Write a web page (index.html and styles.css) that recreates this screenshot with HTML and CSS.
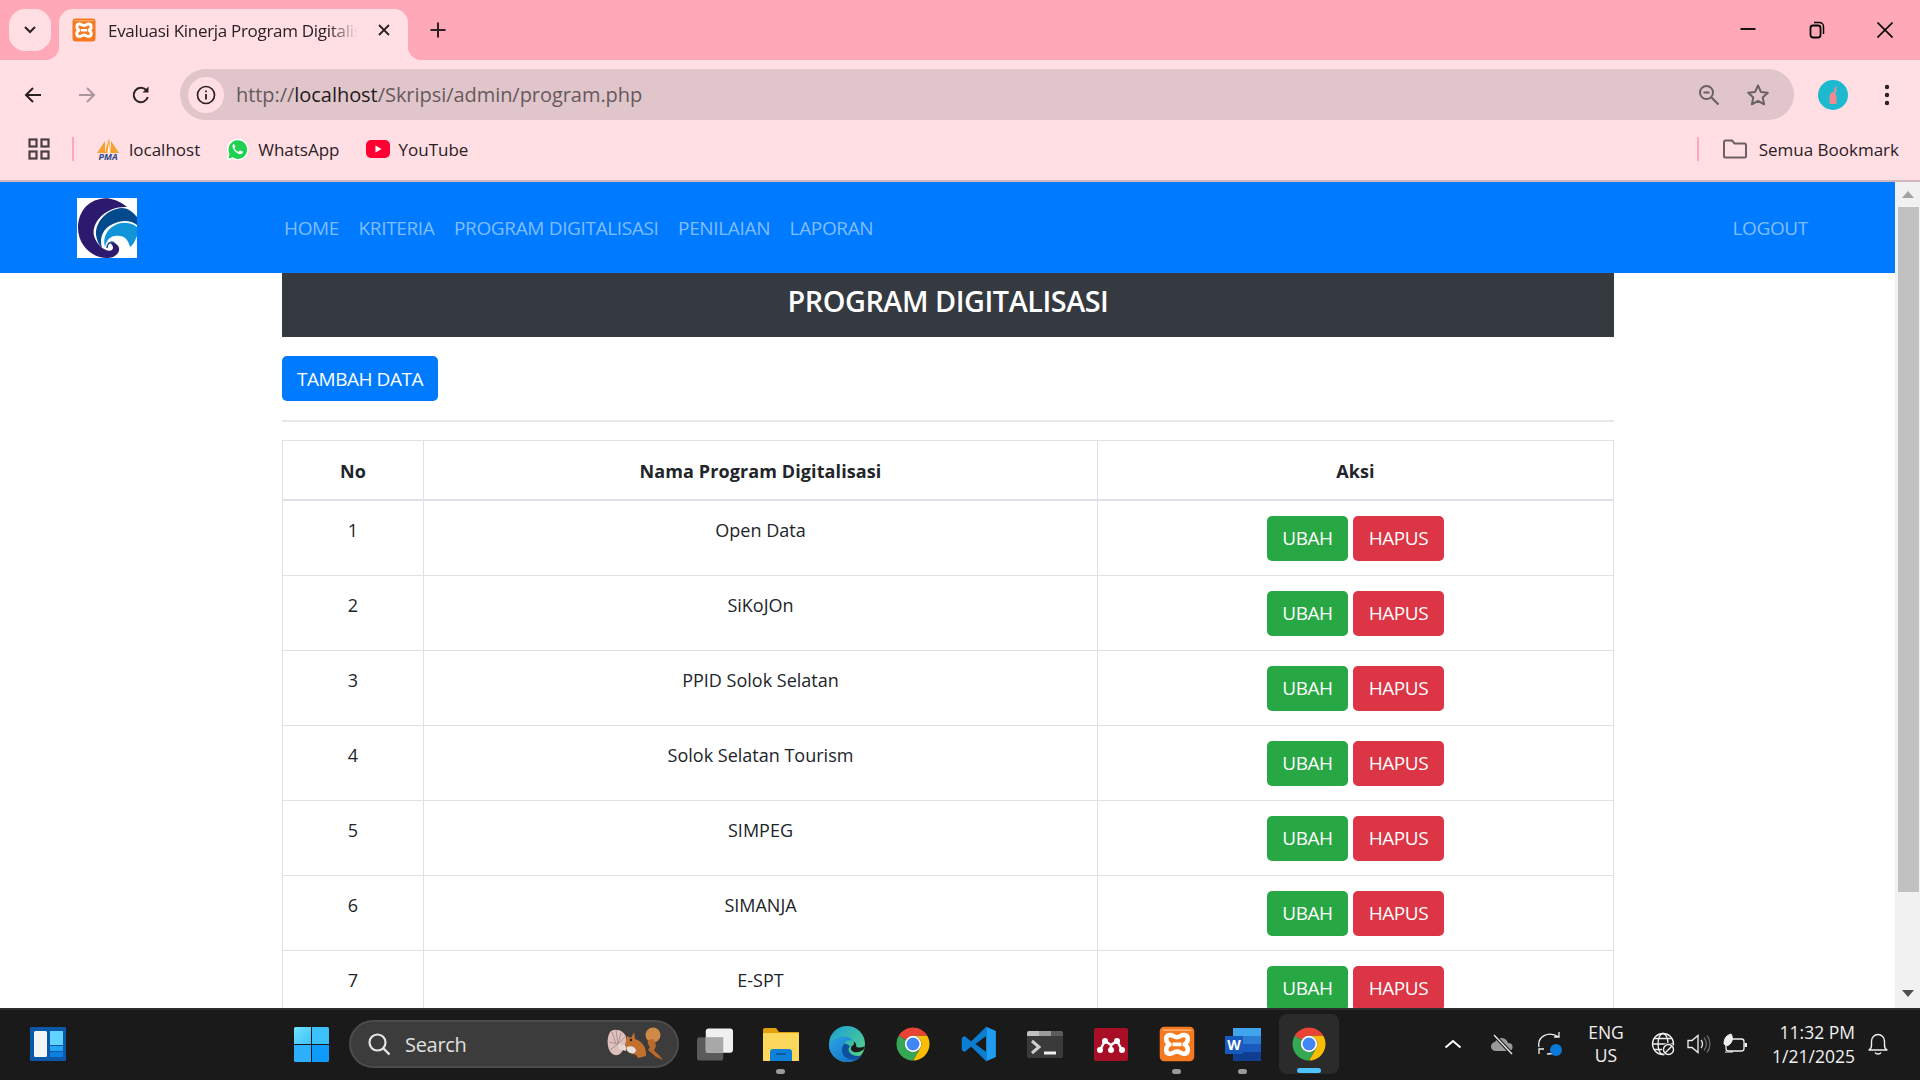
FILE: index.html
```html
<!DOCTYPE html>
<html lang="id">
<head>
  <meta charset="UTF-8" />
  <title>Evaluasi Kinerja Program Digitalisasi</title>
  <link rel="stylesheet" href="styles.css">
</head>
<body>
  <svg class="defs" width="0" height="0">
    <defs>
      <symbol id="chrome" viewBox="0 0 48 48">
        <path fill="#ea4335" d="M4.95 13A22 22 0 0 1 43.05 13L24 13A11 11 0 0 0 14.47 18.5Z"/>
        <path fill="#fbbc04" d="M43.05 13A22 22 0 0 1 24 46L33.53 29.5A11 11 0 0 0 24 13Z"/>
        <path fill="#34a853" d="M24 46A22 22 0 0 1 4.95 13L14.47 18.5A11 11 0 0 0 33.53 29.5Z"/>
        <circle cx="24" cy="24" r="11" fill="#fff"/>
        <circle cx="24" cy="24" r="8.6" fill="#4285f4"/>
      </symbol>
      <symbol id="xampp" viewBox="0 0 48 48">
        <rect x="1" y="1" width="46" height="46" rx="6" fill="#f5791f"/>
        <path d="M5 5.500H43" stroke="#ffc59a" stroke-width="1.500"/>
        <path fill="none" stroke="#fff" stroke-width="6" stroke-linejoin="round" d="M15 12C8 12 8 21 14 24.500C8 28 8 37 15 37C19 37 20 34 24 34C28 34 29 37 33 37C40 37 40 28 34 24.500C40 21 40 12 33 12C29 12 28 15 24 15C20 15 19 12 15 12Z"/>
        <path stroke="#fff" stroke-width="5" d="M18 24.500H30"/>
      </symbol>
      <linearGradient id="winblue" x1="0" y1="0" x2="1" y2="1">
        <stop offset="0" stop-color="#6fe4fd"/>
        <stop offset="1" stop-color="#3cc0fc"/>
      </linearGradient>
      <linearGradient id="edgeback" x1="0" y1="0" x2="1" y2="1">
        <stop offset="0" stop-color="#1b9fd8"/>
        <stop offset="1" stop-color="#5ad87c"/>
      </linearGradient>
      <linearGradient id="edgeblue" x1="0" y1="0" x2="1" y2="1">
        <stop offset="0" stop-color="#2aa5e8"/>
        <stop offset="1" stop-color="#0f6cbd"/>
      </linearGradient>
    </defs>
  </svg>

  <header class="browser">
    <div class="tabstrip">
      <button class="tab-search" aria-label="Cari tab">
        <svg width="14" height="10" viewBox="0 0 14 10"><path d="M2 2l5 5 5-5" fill="none" stroke="#2b2024" stroke-width="2"/></svg>
      </button>
      <div class="tab">
        <svg class="tab-icon" width="24" height="24"><use href="#xampp"/></svg>
        <span class="tab-title">Evaluasi Kinerja Program Digitalisasi</span>
        <svg class="tab-close" width="14" height="14" viewBox="0 0 14 14"><path d="M2 2l10 10M12 2L2 12" stroke="#2b2024" stroke-width="1.800"/></svg>
      </div>
      <svg class="tab-new" width="18" height="18" viewBox="0 0 18 18"><path d="M9 1.500v15M1.500 9h15" stroke="#2b2024" stroke-width="2"/></svg>
      <div class="window-controls">
        <svg width="16" height="16" viewBox="0 0 16 16"><path d="M0.500 7h15" stroke="#000" stroke-width="1.800"/></svg>
        <svg width="16" height="18" viewBox="0 0 16 18"><rect x="1.500" y="4.500" width="10" height="12" rx="2.500" fill="none" stroke="#000" stroke-width="1.800"/><path d="M5 1.500h5.500a4 4 0 0 1 4 4V13" fill="none" stroke="#000" stroke-width="1.500"/></svg>
        <svg width="16" height="16" viewBox="0 0 16 16"><path d="M0.500 0.500l15 15M15.500 0.500l-15 15" stroke="#000" stroke-width="1.600"/></svg>
      </div>
    </div>

    <div class="toolbar">
      <svg class="tool-back" width="20" height="20" viewBox="0 0 20 20"><path d="M18 10H3M10 3l-7 7 7 7" fill="none" stroke="#2b2024" stroke-width="2"/></svg>
      <svg class="tool-forward" width="20" height="20" viewBox="0 0 20 20"><path d="M2 10h15M10 3l7 7-7 7" fill="none" stroke="#a8979b" stroke-width="2"/></svg>
      <svg class="tool-reload" width="20" height="20" viewBox="0 0 20 20"><path d="M16.800 12a7.200 7.200 0 1 1-1.500-6.800" fill="none" stroke="#2b2024" stroke-width="2"/><path d="M17.500 1.500v6h-6z" fill="#2b2024"/></svg>
      <div class="omnibox">
        <span class="site-info">
          <svg width="20" height="20" viewBox="0 0 20 20"><circle cx="10" cy="10" r="8.500" fill="none" stroke="#2b2024" stroke-width="1.700"/><path d="M10 9v5.500M10 5.500v1.800" stroke="#2b2024" stroke-width="1.800"/></svg>
        </span>
        <span class="url">http://<b>localhost</b>/Skripsi/admin/program.php</span>
        <svg class="omni-zoom" width="22" height="22" viewBox="0 0 22 22"><circle cx="8.500" cy="8.500" r="6.500" fill="none" stroke="#6b6063" stroke-width="2"/><path d="M13.500 13.500l7 7" stroke="#6b6063" stroke-width="2.200"/><path d="M5.500 8.500h6" stroke="#6b6063" stroke-width="2"/></svg>
        <svg class="omni-star" width="24" height="24" viewBox="0 0 24 24"><path d="M12 2.500l2.900 6.400 6.900.8-5.100 4.700 1.400 6.900-6.100-3.500-6.100 3.500 1.400-6.900-5.100-4.700 6.900-.8z" fill="none" stroke="#6b6063" stroke-width="2" stroke-linejoin="round"/></svg>
      </div>
      <svg class="avatar" width="30" height="30" viewBox="0 0 30 30">
        <circle cx="15" cy="15" r="15" fill="#1cb9cf"/>
        <path d="M19 6l-1 4 1 1.500-2 1c1.500 3 2.500 6 1 10l1 1.500h-7l-1-1 1-1c-1-3-1-7 1-9l3-1.500.5-3.500z" fill="#ef8a94"/>
      </svg>
      <svg class="kebab" width="6" height="24" viewBox="0 0 6 24"><circle cx="3" cy="4" r="2.200" fill="#2b2024"/><circle cx="3" cy="12" r="2.200" fill="#2b2024"/><circle cx="3" cy="20" r="2.200" fill="#2b2024"/></svg>
    </div>

    <div class="bookmarks">
      <svg class="apps" width="22" height="22" viewBox="0 0 22 22"><g fill="none" stroke="#4a3f43" stroke-width="2.200"><rect x="1.500" y="1.500" width="7" height="7"/><rect x="13.500" y="1.500" width="7" height="7"/><rect x="1.500" y="13.500" width="7" height="7"/><rect x="13.500" y="13.500" width="7" height="7"/></g></svg>
      <span class="bm-sep"></span>
      <a class="bm bm-pma">
        <span class="pma-icon">
          <svg width="24" height="15" viewBox="0 0 24 15"><path d="M1 15L9 3v12zM9 15l4-15 2 15zM15 15V3l8 12z" fill="#f8a02c"/><path d="M11.500 15L13 4l1 11z" fill="#fff"/></svg>
          <i>PMA</i>
        </span>
        localhost
      </a>
      <a class="bm bm-wa">
        <svg width="24" height="25" viewBox="0 0 24 24"><path d="M1.500 23l1.600-6A10.800 10.800 0 1 1 7 21.200z" fill="#fff"/><path d="M3.300 21l1.300-4.500A9.300 9.300 0 1 1 7.600 19.800z" fill="#1fd14f"/><path d="M8.800 6.600c-.5 0-1.300.7-1.300 2.200 0 3 3.900 7.400 7.500 8 1.500.200 2.500-.7 2.700-1.700.1-.5.100-.9 0-1l-2.400-1.200c-.3-.100-.5 0-.7.200l-.8 1c-.2.200-.4.200-.7.100-1.400-.6-2.900-1.900-3.600-3.200-.1-.3 0-.4.100-.6l.6-.8c.1-.2.200-.4.100-.6L9.300 7c-.1-.3-.3-.4-.5-.4z" fill="#fff"/></svg>
        WhatsApp
      </a>
      <a class="bm bm-yt">
        <svg width="24" height="18" viewBox="0 0 24 18"><rect width="24" height="18" rx="5" fill="#ff0033"/><path d="M9.500 5.500v7l6-3.500z" fill="#fff"/></svg>
        YouTube
      </a>
      <span class="bm-sep bm-sep-right"></span>
      <a class="bm bm-all">
        <svg width="24" height="20" viewBox="0 0 24 20"><path d="M1 3a1.500 1.500 0 0 1 1.500-1.500H9L11.500 4.500H21.500A1.500 1.500 0 0 1 23 6V17a1.500 1.500 0 0 1-1.500 1.500h-19A1.500 1.500 0 0 1 1 17z" fill="none" stroke="#6b6063" stroke-width="2"/></svg>
        Semua Bookmark
      </a>
    </div>
  </header>

  <div class="viewport">
    <div class="page">
      <nav class="navbar">
        <svg class="brand" width="60" height="60" viewBox="0 0 60 60">
          <rect width="60" height="60" fill="#fff"/>
          <path fill="#2d1a6e" d="M50 9C40 1 30-1 23 1C8 4 1 17 1 30C1 46 14 60 30 60C38 60 43 55 42 50C41 46 37 44 33 45C36 47 37 50 35 52C30 55 20 48 17 38C14 25 28 8 50 9Z"/>
          <path fill="#034a8d" d="M60 19C55 13 50 10 45 10C30 11 18 24 19 37C20 43 22 47 25 50C22 40 26 30 36 26C44 22 54 22 60 27Z"/>
          <path fill="#1295d8" d="M60 29C52 23 42 24 35 29C28 34 26 42 28 49C29 43 33 38 38 38C48 37 51 42 53 49C56 47 58 43 60 38Z"/>
          <path fill="none" stroke="#1b4f9c" stroke-width="1.500" d="M30 50C30 45 35 42 38 46"/>
        </svg>
        <ul class="nav-links">
          <li><a href="#">HOME</a></li>
          <li><a href="#">KRITERIA</a></li>
          <li><a href="#">PROGRAM DIGITALISASI</a></li>
          <li><a href="#">PENILAIAN</a></li>
          <li><a href="#">LAPORAN</a></li>
        </ul>
        <a class="nav-logout" href="#">LOGOUT</a>
      </nav>

      <main class="container">
        <h3 class="page-title">PROGRAM DIGITALISASI</h3>
        <a class="btn btn-primary btn-add" href="#">TAMBAH DATA</a>
        <hr>
        <table class="data-table">
          <colgroup>
            <col class="col-no">
            <col class="col-name">
            <col class="col-act">
          </colgroup>
          <thead>
            <tr><th>No</th><th>Nama Program Digitalisasi</th><th>Aksi</th></tr>
          </thead>
          <tbody>
            <tr><td>1</td><td>Open Data</td><td><div class="actions"><a class="btn btn-green">UBAH</a><a class="btn btn-red">HAPUS</a></div></td></tr>
            <tr><td>2</td><td>SiKoJOn</td><td><div class="actions"><a class="btn btn-green">UBAH</a><a class="btn btn-red">HAPUS</a></div></td></tr>
            <tr><td>3</td><td>PPID Solok Selatan</td><td><div class="actions"><a class="btn btn-green">UBAH</a><a class="btn btn-red">HAPUS</a></div></td></tr>
            <tr><td>4</td><td>Solok Selatan Tourism</td><td><div class="actions"><a class="btn btn-green">UBAH</a><a class="btn btn-red">HAPUS</a></div></td></tr>
            <tr><td>5</td><td>SIMPEG</td><td><div class="actions"><a class="btn btn-green">UBAH</a><a class="btn btn-red">HAPUS</a></div></td></tr>
            <tr><td>6</td><td>SIMANJA</td><td><div class="actions"><a class="btn btn-green">UBAH</a><a class="btn btn-red">HAPUS</a></div></td></tr>
            <tr><td>7</td><td>E-SPT</td><td><div class="actions"><a class="btn btn-green">UBAH</a><a class="btn btn-red">HAPUS</a></div></td></tr>
          </tbody>
        </table>
      </main>
    </div>

    <div class="scrollbar">
      <span class="arrow-up"></span>
      <span class="thumb"></span>
      <span class="arrow-down"></span>
    </div>
  </div>

  <footer class="taskbar">
    <svg class="widgets" width="36" height="34" viewBox="0 0 36 34">
      <rect width="36" height="34" rx="1" fill="#0c58a8"/>
      <rect x="4" y="4" width="13" height="26" rx="1.500" fill="#f4f4f4"/>
      <rect x="20" y="4" width="13" height="14" fill="#62d2ff"/>
      <rect x="20" y="19" width="13" height="5" fill="#1fa5f3"/>
      <rect x="20" y="25" width="13" height="5" fill="#0d7fe0"/>
    </svg>
    <svg class="winlogo" width="35" height="35" viewBox="0 0 35 35">
      <path fill="url(#winblue)" d="M1.500 0H17V17H0V1.500A1.500 1.500 0 0 1 1.500 0Z"/>
      <path fill="#3cc0fc" d="M18 0H33.500A1.500 1.500 0 0 1 35 1.500V17H18Z"/>
      <path fill="#2cb0fc" d="M0 18H17V35H1.500A1.500 1.500 0 0 1 0 33.500Z"/>
      <path fill="#0f9bfb" d="M18 18H35V33.500A1.500 1.500 0 0 1 33.500 35H18Z"/>
    </svg>
    <div class="search">
      <svg width="24" height="24" viewBox="0 0 24 24"><circle cx="10.500" cy="10.500" r="8" fill="none" stroke="#e6e6e6" stroke-width="2.200"/><path d="M16.500 16.500l6 6" stroke="#e6e6e6" stroke-width="2.400"/></svg>
      <span>Search</span>
      <svg class="squirrel" width="58" height="36" viewBox="0 0 58 36">
        <path d="M4 5C10 2 17 5 19 11C20 18 16 27 11 29C6 30 2 26 1 20C0 14 1 8 4 5Z" fill="#dcc1bc"/>
        <path d="M5 6l4 12M9 4l2 14M14 7l-3 11M18 11l-7 7M2 16l9 2M3 24l8-6" stroke="#a5888a" stroke-width=".8"/>
        <path d="M11 18l9 2-1 5-7-2z" fill="#e8d8d4"/>
        <circle cx="46" cy="9" r="7.500" fill="#d08a48"/>
        <path d="M41 14c-1 3 1 6 2 7l-2 3 8 7 7 3c-1-2-3-3-4-5-2-2-4-3-5-5 3-3 2-8-1-11z" fill="#b8692b"/>
        <path d="M20 10l4 2 3-6 1 7c4 1 8 4 10 9 1 3 1 6 1 8l-8 2-2-3-8-3c-3-4-3-9-1-16z" fill="#c2702e"/>
        <path d="M20 21c4-2 8 0 9 3 0 3-3 4-6 3-2-1-4-3-3-6z" fill="#e8e0dc"/>
        <circle cx="24" cy="14" r="1.200" fill="#2a1a10"/>
      </svg>
    </div>
    <div class="task-icons">
      <span class="task">
        <svg width="37" height="33" viewBox="0 0 37 33"><rect y="9" width="27" height="24" rx="3" fill="#5a5a5a"/><rect x="9" width="28" height="25" rx="3" fill="#f0f0f0"/><rect x="9" y="9" width="18" height="16" fill="#a8a8a8"/></svg>
      </span>
      <span class="task task-open">
        <svg width="36" height="33" viewBox="0 0 36 33"><path d="M0 2a2 2 0 0 1 2-2h11l3 4h20v29H0z" fill="#e3a008"/><rect y="5" width="36" height="28" rx="1" fill="#fbd75b"/><path d="M7 33V24a3 3 0 0 1 3-3h16a3 3 0 0 1 3 3v9z" fill="#0f80d8"/><path d="M13 26h10" stroke="#0a4f94" stroke-width="1.500"/></svg>
      </span>
      <span class="task">
        <svg width="36" height="36" viewBox="0 0 36 36">
          <circle cx="18" cy="18" r="18" fill="url(#edgeback)"/>
          <path fill="url(#edgeblue)" d="M0 19C0 28 8 36 18 36C24 36 29 34 32 30C28 32 22 33 18 30C14 27 13 22 15 18C16 15 20 13 24 15C20 9 8 8 0 19Z"/>
          <path fill="#0e4f9e" d="M15 18C11 23 13 31 20 33C25 34.500 30 33 33 29C29 31 24 30 21 27C19 25 19 22 21 20C18 18 16 17 15 18Z"/>
          <path fill="#1a1a1a" d="M24 15C26 17 25 19 23 20C21 22 22 25 25 26C29 27 33 25 35 23L36 20C32 22 28 22 27 20C28 18 26 16 24 15Z"/>
        </svg>
      </span>
      <span class="task"><svg width="36" height="36"><use href="#chrome"/></svg></span>
      <span class="task">
        <svg width="36" height="36" viewBox="0 0 100 100"><path fill="#1f9cf0" d="M70 2L97 14V86L70 98Z"/><path fill="#0a7ed3" d="M70 2L28 43L10 28L2 33V67L10 72L28 57L70 98V72L40 50L70 28Z"/></svg>
      </span>
      <span class="task">
        <svg width="36" height="27" viewBox="0 0 36 27"><rect width="36" height="27" rx="2" fill="#3a3a3a"/><path d="M0 2a2 2 0 0 1 2-2h10v5H0z" fill="#c0c0c0"/><rect x="12" width="12" height="5" fill="#9a9a9a"/><path d="M24 0h10a2 2 0 0 1 2 2v3H24z" fill="#5c5c5c"/><path d="M5 10l7 6-7 6" fill="none" stroke="#cfcfcf" stroke-width="3"/><path d="M17 22h12" stroke="#f0f0f0" stroke-width="3"/></svg>
      </span>
      <span class="task">
        <svg width="34" height="33" viewBox="0 0 34 33"><rect width="34" height="33" rx="2" fill="#a80f26"/><path d="M6 22L11 13 17 17 23 13 28 22M17 17v5" fill="none" stroke="#fff" stroke-width="2.500"/><g fill="#fff"><circle cx="6" cy="22" r="3"/><circle cx="28" cy="22" r="3"/><circle cx="17" cy="22" r="3"/><circle cx="11" cy="13" r="3"/><circle cx="23" cy="13" r="3"/></g></svg>
      </span>
      <span class="task task-open"><svg width="36" height="36"><use href="#xampp"/></svg></span>
      <span class="task task-open">
        <svg width="36" height="33" viewBox="0 0 36 33"><rect x="8" width="28" height="33" rx="2" fill="#2b7cd3"/><rect x="8" width="28" height="8" fill="#41a5ee"/><rect x="8" y="16" width="28" height="8" fill="#185abd"/><rect x="8" y="24" width="28" height="9" fill="#103f91"/></svg>
        <b class="word-w">W</b>
      </span>
      <span class="task task-active"><svg width="36" height="36"><use href="#chrome"/></svg></span>
    </div>
    <div class="tray">
      <svg class="tray-caret" width="18" height="10" viewBox="0 0 18 10"><path d="M1.500 8.500L9 2l7.500 6.500" fill="none" stroke="#fff" stroke-width="2"/></svg>
      <svg class="tray-cloud" width="24" height="22" viewBox="0 0 24 22"><path d="M6 18a4.500 4.500 0 0 1-1-9 7 7 0 0 1 13 1 4 4 0 0 1 1 8z" fill="#9a9a9a"/><path d="M4 2l18 19" stroke="#1a1a1a" stroke-width="3.500"/><path d="M4 2l18 19" stroke="#f0f0f0" stroke-width="1.300"/></svg>
      <svg class="tray-sync" width="24" height="26" viewBox="0 0 24 26"><path d="M1 16C-1 6 10-1 21 6M21 1v5h-5M21 22l-12 1M1 23v-5h5" fill="none" stroke="#f0f0f0" stroke-width="1.300"/><circle cx="18" cy="19" r="6" fill="#0a78d7"/></svg>
      <div class="lang">ENG<br>US</div>
      <svg class="tray-globe" width="24" height="24" viewBox="0 0 24 24"><g fill="none" stroke="#f0f0f0" stroke-width="1.300"><circle cx="12" cy="12" r="10.500"/><ellipse cx="12" cy="12" rx="5" ry="10.500"/><path d="M1.500 12h21M3 6.500h18M3 17.500h9"/></g><circle cx="17.500" cy="17.500" r="6.500" fill="#1a1a1a"/><circle cx="17.500" cy="17.500" r="5" fill="none" stroke="#f0f0f0" stroke-width="1.400"/><path d="M14 21l7-7" stroke="#f0f0f0" stroke-width="1.400"/></svg>
      <svg class="tray-sound" width="24" height="22" viewBox="0 0 24 22"><path d="M1 7.500h4l6-5v17l-6-5H1z" fill="none" stroke="#f0f0f0" stroke-width="1.300"/><path d="M14 7c2 2 2 6 0 8" fill="none" stroke="#f0f0f0" stroke-width="1.300"/><path d="M17 4.500c3 4 3 9 0 13M20 2.500c4 5 4 12 0 17" fill="none" stroke="#6a6a6a" stroke-width="1.300"/></svg>
      <svg class="tray-battery" width="25" height="22" viewBox="0 0 25 22"><rect x="3" y="6" width="18" height="12" rx="2.500" fill="none" stroke="#f0f0f0" stroke-width="1.300"/><rect x="21.500" y="10" width="2.500" height="4" fill="#f0f0f0"/><path d="M1 11C1 5 4 2 8 1c2 3 2 7-1 10-2 2-4 2-6 0zM2 19h8" fill="#f0f0f0" stroke="#f0f0f0"/></svg>
      <div class="clock">11:32 PM<br>1/21/2025</div>
      <svg class="tray-bell" width="20" height="22" viewBox="0 0 20 22"><path d="M1 17c2-1 2.500-3 2.500-5V8a6.500 6.500 0 0 1 13 0v4c0 2 .5 4 2.500 5z" fill="none" stroke="#f0f0f0" stroke-width="1.400" stroke-linejoin="round"/><path d="M7 19.500c1 2 5 2 6 0" fill="none" stroke="#f0f0f0" stroke-width="1.400"/></svg>
    </div>
  </footer>
</body>
</html>
```

FILE: styles.css
```css
* {
  box-sizing: border-box;
}
html, body {
  height: 100%;
}
body {
  margin: 0;
  width: 1920px;
  height: 1080px;
  overflow: hidden;
  display: flex;
  flex-direction: column;
  font-family: "Open Sans", "Noto Sans", sans-serif;
  color: #212529;
  background: #fff;
}
a {
  text-decoration: none;
}
.defs {
  position: absolute;
}

/* browser chrome */
.browser {
  flex: none;
  height: 182px;
  background: #ffdfe4;
  border-bottom: 2px solid #d2b6bb;
}
.tabstrip {
  height: 60px;
  background: #ffa9b8;
  display: flex;
  align-items: flex-start;
  padding: 9px 0 0 9px;
}
.tab-search {
  width: 42px;
  height: 42px;
  border: none;
  border-radius: 16px;
  background: #ffdfe4;
  padding: 0;
}
.tab {
  width: 349px;
  height: 51px;
  margin-left: 8px;
  background: #ffdfe4;
  border-radius: 14px 14px 0 0;
  display: flex;
  align-items: center;
  padding: 0 0 9px 13px;
  font-size: 17px;
  color: #2b2024;
  position: relative;
}
.tab::before,
.tab::after {
  content: "";
  position: absolute;
  bottom: 0;
  width: 14px;
  height: 14px;
}
.tab::before {
  left: -14px;
  background: radial-gradient(circle at 0 0, #ffa9b8 14px, #ffdfe4 14.5px);
}
.tab::after {
  right: -14px;
  background: radial-gradient(circle at 100% 0, #ffa9b8 14px, #ffdfe4 14.5px);
}
.tab-icon {
  flex: none;
}
.tab-title {
  width: 250px;
  margin-left: 12px;
  white-space: nowrap;
  overflow: hidden;
  letter-spacing: -0.3px;
  -webkit-mask-image: linear-gradient(to right, #000 88%, transparent 100%);
  mask-image: linear-gradient(to right, #000 88%, transparent 100%);
}
.tab-close {
  margin-left: 19px;
}
.tab-new {
  margin: 12px 0 0 21px;
}
.window-controls {
  margin-left: auto;
  width: 180px;
  height: 42px;
  padding-right: 27px;
  display: flex;
  align-items: center;
  justify-content: space-between;
}
.toolbar {
  height: 60px;
  display: flex;
  align-items: center;
  padding: 9px 0 0 23px;
}
.tool-forward {
  margin-left: 34px;
}
.tool-reload {
  margin-left: 34px;
}
.omnibox {
  width: 1614px;
  height: 51px;
  margin-left: 29px;
  background: #e0c6ca;
  border-radius: 26px;
  display: flex;
  align-items: center;
  padding-left: 8px;
}
.site-info {
  width: 36px;
  height: 36px;
  border-radius: 50%;
  background: #ffdfe4;
  display: flex;
  align-items: center;
  justify-content: center;
}
.url {
  margin-left: 12px;
  font-size: 20px;
  letter-spacing: -0.05px;
  color: #66595d;
}
.url b {
  font-weight: 400;
  color: #1f1a1c;
}
.omni-zoom {
  margin-left: auto;
}
.omni-star {
  margin: 0 24px 0 26px;
}
.avatar {
  margin-left: 24px;
}
.kebab {
  margin-left: 36px;
}
.bookmarks {
  height: 60px;
  display: flex;
  align-items: center;
  padding-left: 28px;
  padding-bottom: 2px;
  font-size: 17px;
  color: #2b2024;
}
.bm-sep {
  width: 2px;
  height: 24px;
  margin-left: 22px;
  background: #ffa9b8;
}
.bm {
  display: flex;
  align-items: center;
  color: #2b2024;
}
.bm-pma {
  margin-left: 22px;
  gap: 9px;
}
.pma-icon {
  width: 24px;
  height: 23px;
  display: flex;
  flex-direction: column;
  align-items: center;
  font-size: 9px;
  line-height: 8px;
  font-weight: 700;
  color: #2f4a86;
  letter-spacing: 0;
}
.pma-icon svg {
  flex: none;
}
.bm-wa {
  margin-left: 25px;
  gap: 9px;
}
.bm-yt {
  margin-left: 26px;
  gap: 9px;
}
.bm-sep-right {
  margin-left: auto;
}
.bm-all {
  margin: 0 21px 0 24px;
  gap: 12px;
}

/* page area */
.viewport {
  flex: none;
  height: 826px;
  display: flex;
}
.page {
  width: 1895px;
  overflow: hidden;
}
.navbar {
  height: 91px;
  background: #007bff;
  display: flex;
  align-items: center;
  padding: 0 87px 0 77px;
  font-size: 19px;
}
.brand {
  flex: none;
}
.nav-links {
  list-style: none;
  margin: 0 0 0 147px;
  padding: 0;
  display: flex;
  gap: 19.500px;
}
.nav-links a,
.nav-logout {
  color: #80bdff;
  letter-spacing: -0.35px;
}
.nav-logout {
  margin-left: auto;
}
.container {
  width: 1332px;
  margin-left: 282px;
}
.page-title {
  margin: 0 0 19px;
  height: 64px;
  padding-top: 10px;
  background: #343a40;
  color: #fff;
  text-align: center;
  font-size: 28.800px;
  line-height: 36px;
  font-weight: 600;
  letter-spacing: -0.45px;
}
.btn {
  display: inline-flex;
  align-items: center;
  justify-content: center;
  height: 45px;
  border-radius: 5px;
  color: #fff;
  font-size: 19px;
  letter-spacing: -0.45px;
}
.btn-add {
  width: 156px;
}
.btn-primary {
  background: #007bff;
}
.btn-green {
  width: 81px;
  background: #28a745;
}
.btn-red {
  width: 91px;
  background: #dc3545;
}
hr {
  height: 2px;
  margin: 19px 0 18px;
  border: none;
  background: #e6e7e9;
}
.data-table {
  width: 1332px;
  table-layout: fixed;
  border-collapse: collapse;
  font-size: 18px;
}
.col-no {
  width: 141px;
}
.col-name {
  width: 674px;
}
.data-table th,
.data-table td {
  border: 1px solid #dee2e6;
  text-align: center;
  vertical-align: top;
}
.data-table th {
  height: 59px;
  padding-top: 16px;
  font-weight: 700;
  line-height: 29px;
  border-bottom-width: 2px;
  letter-spacing: 0.1px;
}
.data-table td {
  height: 75px;
  padding-top: 15px;
  line-height: 29px;
}
.data-table tbody tr:first-child td {
  height: 76px;
}
.actions {
  display: flex;
  justify-content: center;
  gap: 5px;
}
.scrollbar {
  width: 25px;
  background: #f1f1f1;
  display: flex;
  flex-direction: column;
  align-items: center;
  position: relative;
}
.arrow-up {
  margin-top: 9px;
  border: 6px solid transparent;
  border-top: none;
  border-bottom: 7px solid #a3a3a3;
}
.thumb {
  width: 21px;
  height: 685px;
  margin: 9px 0 0 1px;
  background: #c1c1c1;
}
.arrow-down {
  margin-top: 98px;
  border: 6px solid transparent;
  border-bottom: none;
  border-top: 7px solid #505050;
}

/* taskbar */
.taskbar {
  flex: none;
  height: 72px;
  background: #1a1a1a;
  border-top: 2px solid #2c2c2c;
  display: flex;
  align-items: center;
  padding: 0 0 2px 30px;
  color: #fff;
}
.winlogo {
  margin-left: 228px;
}
.search {
  width: 330px;
  height: 48px;
  margin-left: 20px;
  border-radius: 24px;
  background: #3c3c3c;
  border: 2px solid #4b4b4b;
  display: flex;
  align-items: center;
  padding-left: 16px;
  font-size: 20px;
  color: #e0e0e0;
}
.search span {
  margin-left: 14px;
  letter-spacing: -0.3px;
}
.squirrel {
  margin-left: auto;
  margin-right: 12px;
}
.task-icons {
  margin-left: 18px;
  display: flex;
  gap: 30px;
}
.task {
  width: 36px;
  height: 36px;
  position: relative;
  display: flex;
  align-items: center;
  justify-content: center;
}
.task-open::after {
  content: "";
  position: absolute;
  left: 13px;
  top: 43px;
  width: 9px;
  height: 5px;
  border-radius: 3px;
  background: #9a9a9a;
}
.task-active::before {
  content: "";
  position: absolute;
  left: -12px;
  top: -12px;
  width: 60px;
  height: 60px;
  border-radius: 8px;
  background: #2b2b2b;
  z-index: 0;
}
.task-active svg {
  position: relative;
}
.task-active::after {
  content: "";
  position: absolute;
  left: 6px;
  top: 42px;
  width: 24px;
  height: 5px;
  border-radius: 3px;
  background: #4cc2ff;
}
.word-w {
  position: absolute;
  left: 0;
  top: 10px;
  width: 18px;
  height: 18px;
  background: #185abd;
  color: #fff;
  font-size: 14px;
  line-height: 18px;
  text-align: center;
}
.tray {
  margin-left: auto;
  display: flex;
  align-items: center;
  padding-right: 32px;
  font-size: 17.500px;
  color: #f0f0f0;
}
.tray-cloud {
  margin-left: 28px;
}
.tray-sync {
  margin-left: 24px;
}
.lang {
  width: 50px;
  margin-left: 19px;
  text-align: center;
  line-height: 23px;
}
.tray-globe {
  margin-left: 20px;
}
.tray-sound {
  margin-left: 12px;
}
.tray-battery {
  margin-left: 12px;
}
.clock {
  margin-left: 11px;
  width: 96px;
  text-align: right;
  line-height: 24px;
  white-space: nowrap;
}
.tray-bell {
  margin-left: 13px;
}
```
